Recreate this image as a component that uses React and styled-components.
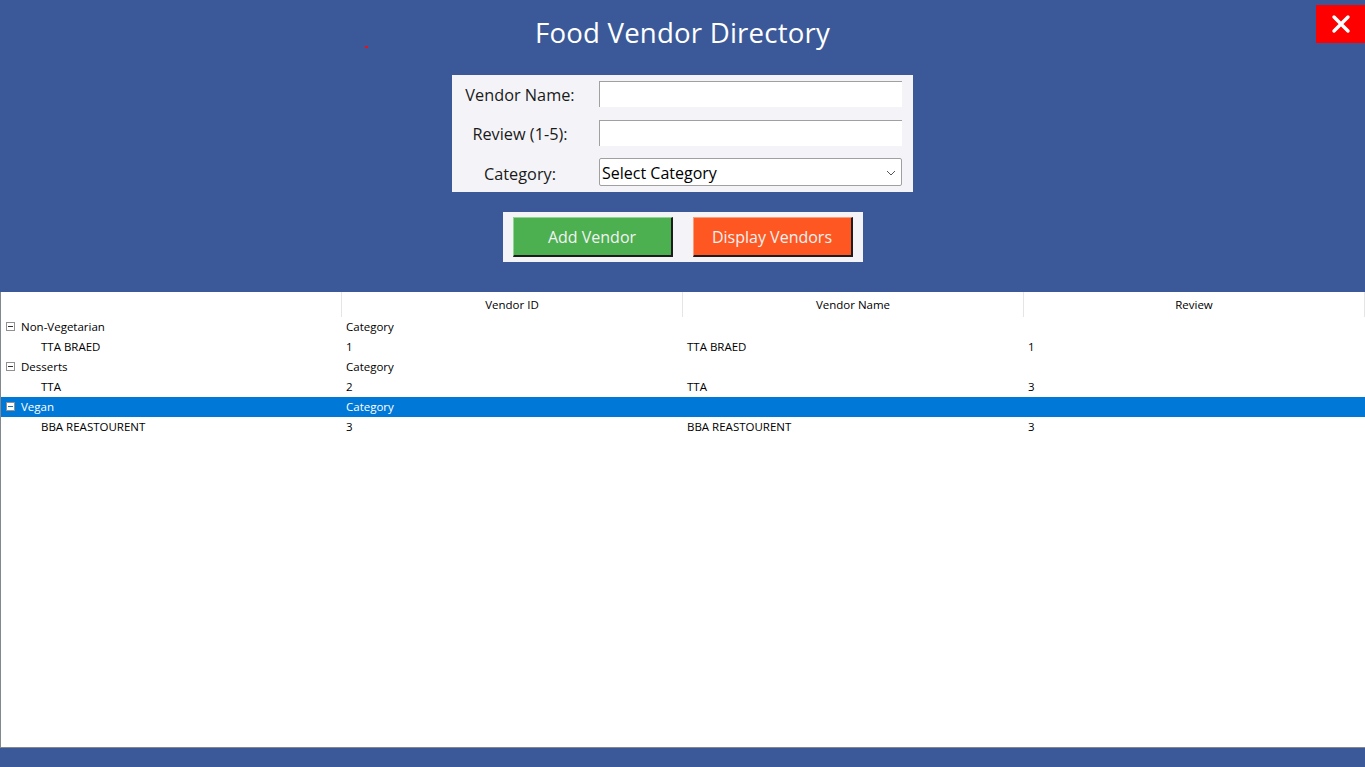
import React from 'react';
import styled, { createGlobalStyle } from 'styled-components';

const GlobalStyle = createGlobalStyle`
  html, body {
    margin: 0;
    padding: 0;
    background: #3b5998;
    font-family: "Open Sans", "Noto Sans", sans-serif;
  }
`;

const groups = [
  { name: 'Non-Vegetarian', vendors: [{ id: 1, name: 'TTA BRAED', review: 1 }] },
  { name: 'Desserts', vendors: [{ id: 2, name: 'TTA', review: 3 }] },
  { name: 'Vegan', selected: true, vendors: [{ id: 3, name: 'BBA REASTOURENT', review: 3 }] },
];

function App() {
  return (
    <Page>
      <GlobalStyle />
      <Header>
        <Title>Food Vendor Directory</Title>
        <Speck />
        <CloseButton aria-label="Close">
          <svg width="20" height="20" viewBox="0 0 20 20">
            <path d="M3 3 L17 17 M17 3 L3 17" stroke="#fff" strokeWidth="3.4" strokeLinecap="round" />
          </svg>
        </CloseButton>
        <FormPanel>
          <Label>Vendor Name:</Label>
          <TextInput type="text" />
          <Label>Review (1-5):</Label>
          <TextInput type="text" />
          <Label>Category:</Label>
          <SelectBox>
            <span>Select Category</span>
            <svg width="10" height="6" viewBox="0 0 10 6">
              <path d="M1 1 L5 5 L9 1" fill="none" stroke="#555" strokeWidth="1" />
            </svg>
          </SelectBox>
        </FormPanel>
        <ButtonPanel>
          <ActionButton $bg="#4caf50" $light="#8fd692">Add Vendor</ActionButton>
          <ActionButton $bg="#ff5722" $light="#ff9a7a">Display Vendors</ActionButton>
        </ButtonPanel>
      </Header>

      <TreeList>
        <HeaderRow>
          <HeaderCell />
          <HeaderCell>Vendor ID</HeaderCell>
          <HeaderCell>Vendor Name</HeaderCell>
          <HeaderCell>Review</HeaderCell>
        </HeaderRow>
        {groups.map((g) => (
          <React.Fragment key={g.name}>
            <Row $selected={g.selected}>
              <Cell>
                <Toggle $selected={g.selected} />
                <GroupName>{g.name}</GroupName>
              </Cell>
              <Cell>Category</Cell>
              <Cell />
              <Cell />
            </Row>
            {g.vendors.map((v) => (
              <Row key={v.id}>
                <Cell $indent>{v.name}</Cell>
                <Cell>{v.id}</Cell>
                <Cell>{v.name}</Cell>
                <Cell>{v.review}</Cell>
              </Row>
            ))}
          </React.Fragment>
        ))}
      </TreeList>
      <Footer />
    </Page>
  );
}

export default App;

const Page = styled.div`
  height: 767px;
  display: flex;
  flex-direction: column;
  background: #3b5998;
`;

const Header = styled.div`
  position: relative;
  height: 292px;
  display: flex;
  flex-direction: column;
  align-items: center;
  box-sizing: border-box;
  padding-top: 13px;
`;

const Title = styled.h1`
  margin: 0;
  height: 38px;
  line-height: 38px;
  font-size: 27.6px;
  font-weight: 400;
  color: #ffffff;
  letter-spacing: 0.2px;
`;

const Speck = styled.span`
  position: absolute;
  left: 365px;
  top: 46px;
  width: 3px;
  height: 2px;
  background: #e8101a;
`;

const CloseButton = styled.button`
  position: absolute;
  top: 5px;
  right: 0;
  width: 49px;
  height: 38px;
  border: none;
  padding: 0;
  background: #ff0000;
  display: flex;
  align-items: center;
  justify-content: center;
  cursor: pointer;
`;

const FormPanel = styled.div`
  margin-top: 24px;
  width: 461px;
  box-sizing: border-box;
  padding: 6px 11px 6px 0;
  background: #f4f4f8;
  display: grid;
  grid-template-columns: 136px 303px;
  column-gap: 11px;
  row-gap: 13px;
  align-items: center;
`;

const Label = styled.label`
  text-align: center;
  font-size: 16.3px;
  color: #1a1a1a;
  white-space: nowrap;
  padding-top: 2px;
`;

const TextInput = styled.input`
  height: 26px;
  box-sizing: border-box;
  border: none;
  border-top: 1px solid #a0a0a0;
  border-left: 1px solid #a0a0a0;
  background: #ffffff;
  outline: none;
  font-family: inherit;
  font-size: 16px;
  padding: 0 3px;
`;

const SelectBox = styled.div`
  height: 28px;
  box-sizing: border-box;
  border: 1px solid #a0a0a0;
  border-radius: 2px;
  background: #ffffff;
  display: flex;
  align-items: center;
  justify-content: space-between;
  padding: 1px 5px 0 2px;
  font-size: 16px;
  color: #000;
  margin-top: -1px;
`;

const ButtonPanel = styled.div`
  margin-top: 20px;
  width: 360px;
  height: 50px;
  box-sizing: border-box;
  padding: 5px 10px;
  background: #f4f4f8;
  display: flex;
  gap: 20px;
`;

const ActionButton = styled.button`
  width: 160px;
  height: 40px;
  box-sizing: border-box;
  background: ${(p) => p.$bg};
  border-style: solid;
  border-width: 1px 2px 2px 1px;
  border-color: ${(p) => p.$light} #1c1c1c #1c1c1c ${(p) => p.$light};
  color: #f2f2f2;
  font-family: inherit;
  font-size: 16px;
  padding: 0;
  cursor: pointer;
`;

const TreeList = styled.div`
  flex: 1;
  background: #ffffff;
  border-left: 1px solid #828790;
  border-bottom: 1px solid #828790;
  font-size: 11.5px;
  color: #000;
`;

const HeaderRow = styled.div`
  display: grid;
  grid-template-columns: 341px 341px 341px 1fr;
  height: 25px;
`;

const HeaderCell = styled.div`
  display: flex;
  align-items: center;
  justify-content: center;
  border-right: 1px solid #e5e5e5;
`;

const Row = styled.div`
  display: grid;
  grid-template-columns: 341px 341px 341px 1fr;
  height: 20px;
  background: ${(p) => (p.$selected ? '#0078d7' : 'transparent')};
  color: ${(p) => (p.$selected ? '#ffffff' : '#000000')};
`;

const Cell = styled.div`
  display: flex;
  align-items: center;
  box-sizing: border-box;
  padding-left: ${(p) => (p.$indent ? '40px' : '4px')};
  padding-bottom: 1px;
  white-space: nowrap;
  overflow: hidden;
`;

const Toggle = styled.span`
  position: relative;
  width: 9px;
  height: 9px;
  box-sizing: border-box;
  border: 1px solid #919191;
  background: #ffffff;
  margin-left: 1px;
  &::after {
    content: '';
    position: absolute;
    left: 1px;
    right: 1px;
    top: 3px;
    height: 1px;
    background: ${(p) => (p.$selected ? '#0078d7' : '#333')};
  }
`;

const GroupName = styled.span`
  margin-left: 6px;
`;

const Footer = styled.div`
  height: 19px;
  background: #3b5998;
`;
